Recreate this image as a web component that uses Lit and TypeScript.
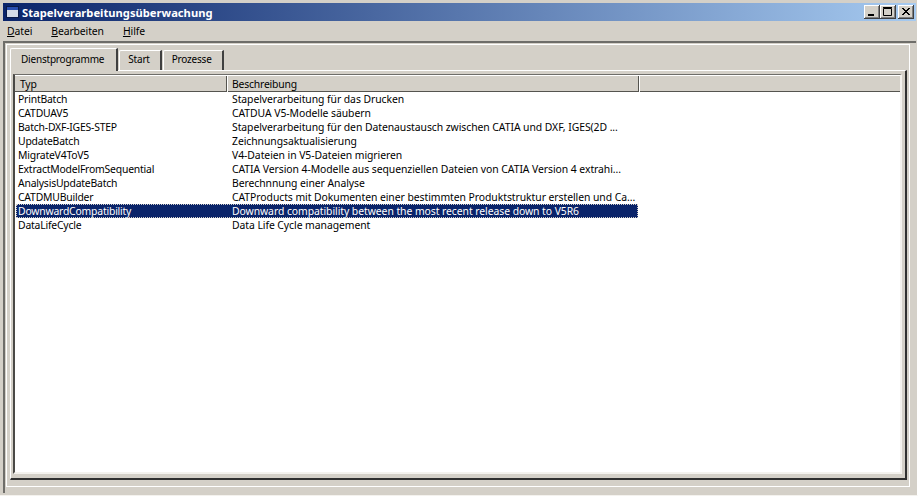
import { LitElement, html, css } from "lit";
import { customElement } from "lit/decorators.js";

const rows: [string, string][] = [
  ["PrintBatch", "Stapelverarbeitung für das Drucken"],
  ["CATDUAV5", "CATDUA V5-Modelle säubern"],
  ["Batch-DXF-IGES-STEP", "Stapelverarbeitung für den Datenaustausch zwischen CATIA und DXF, IGES(2D ..."],
  ["UpdateBatch", "Zeichnungsaktualisierung"],
  ["MigrateV4ToV5", "V4-Dateien in V5-Dateien migrieren"],
  ["ExtractModelFromSequential", "CATIA Version 4-Modelle aus sequenziellen Dateien von CATIA Version 4 extrahi..."],
  ["AnalysisUpdateBatch", "Berechnnung einer Analyse"],
  ["CATDMUBuilder", "CATProducts mit Dokumenten einer bestimmten Produktstruktur erstellen und Ca..."],
  ["DownwardCompatibility", "Downward compatibility between the most recent release down to V5R6"],
  ["DataLifeCycle", "Data Life Cycle management"],
];

@customElement("app-root")
export class AppRoot extends LitElement {
  static styles = css`
    :host { display: block; width: 918px; height: 496px; overflow: hidden; background: #d4d0c8;
      font: 10.4px "Noto Sans", sans-serif; letter-spacing: -0.2px; color: #000; }
    .window { box-sizing: border-box; height: 496px; padding: 3px 1px 2px 3px; display: flex; flex-direction: column; border-right: 1px solid #fff; border-bottom: 1px solid #f4f2ee; }
    .title { height: 18px; flex: none; display: flex; align-items: center; background: linear-gradient(90deg, #0a246a, #a6caf0); color: #fff; font-weight: 700; font-size: 11.2px; letter-spacing: 0; padding: 0 2px 0 3px; }
    .title svg { display: block; margin-right: 3px; }
    .title span { flex: 1; }
    .wb { box-sizing: border-box; width: 16px; height: 14px; background: #d4d0c8; box-shadow: inset -1px -1px 0 #404040, inset 1px 1px 0 #fff, inset -2px -2px 0 #808080; display: flex; }
    .wb svg { display: block; }
    .wb.gap { margin-left: 2px; }
    .menu { height: 20px; flex: none; display: flex; align-items: center; padding: 0 0 0 4px; gap: 19px; letter-spacing: -0.1px; }
    .frame { flex: 1; min-height: 0; border-top: 2px solid #6e6d69; border-left: 2px solid #6e6d69; display: flex; flex-direction: column; }
    .inner { flex: 1; min-height: 0; margin: 1px 6px 6px 1px; border: 1px solid #fff; padding: 1px 2px 6px 3px; display: flex; flex-direction: column; }
    .tabs { display: flex; height: 24px; flex: none; align-items: flex-end; position: relative; z-index: 1; font-size: 10px; }
    .tab { box-sizing: border-box; height: 20px; border-top: 1px solid #fff; border-left: 1px solid #fff; border-right: 2px solid #404040; border-top-left-radius: 2px; display: flex; align-items: center; padding: 0 10px 3px 8px; margin-left: 1px; }
    .tab.active { height: 23px; margin: 0 0 -1px 0; padding: 0 12px 3px 10px; background: #d4d0c8; }
    .pane { flex: 1; min-height: 0; border-top: 1px solid #fff; border-left: 1px solid #fff; border-right: 2px solid #303030; border-bottom: 2px solid #303030; padding: 3px 3px 4px 2px; display: flex; }
    .list { flex: 1; min-width: 0; border-top: 1px solid #6e6d69; border-left: 2px solid #4a4946; border-right: 2px solid #f4f2ee; border-bottom: 2px solid #f4f2ee; background: #fff; display: flex; flex-direction: column; }
    .head { height: 15px; flex: none; display: grid; grid-template-columns: 212px 412px 1fr; background: #d4d0c8; border-top: 1px solid #fff; border-bottom: 1px solid #55544f; }
    .head div { padding-left: 5px; border-right: 1px solid #55544f; box-shadow: 1px 0 0 #fff; line-height: 16px; }
    .head div:last-child { border-right: 0; box-shadow: none; }
    .rows { flex: 1; padding: 0 0 0 1px; }
    .row { width: 622px; height: 14px; display: grid; grid-template-columns: 214px 1fr; line-height: 14px; white-space: nowrap; box-sizing: border-box; }
    .row div { padding-left: 2px; overflow: hidden; }
    .row div + div { letter-spacing: -0.06px; }
    .row.sel { background: #0a246a; color: #fff; outline: 1px dotted #d4d0c8; outline-offset: -1px; }
  `;

  render() {
    return html`<div class="window">
      <div class="title">
        <svg width="13" height="12" viewBox="0 0 13 12"><rect x="0.5" y="0.5" width="12" height="11" fill="#d4dbe8" stroke="#0a1a48"/><rect x="1" y="1" width="11" height="3" fill="#2a4fb0"/></svg>
        <span>Stapelverarbeitungsüberwachung</span>
        <div class="wb"><svg width="16" height="14"><rect x="4" y="9" width="6" height="2" fill="#000"/></svg></div>
        <div class="wb"><svg width="16" height="14"><path d="M3.5 3.5h8v7h-8z M3 2.5h9" fill="none" stroke="#000"/></svg></div>
        <div class="wb gap"><svg width="16" height="14"><path d="M4 3l7 7M5 3l7 7M11 3l-7 7M12 3l-7 7" stroke="#000"/></svg></div>
      </div>
      <div class="menu"><span><u>D</u>atei</span><span><u>B</u>earbeiten</span><span><u>H</u>ilfe</span></div>
      <div class="frame"><div class="inner">
        <div class="tabs">
          <div class="tab active">Dienstprogramme</div>
          <div class="tab">Start</div>
          <div class="tab">Prozesse</div>
        </div>
        <div class="pane"><div class="list">
          <div class="head"><div>Typ</div><div>Beschreibung</div><div></div></div>
          <div class="rows">${rows.map((r, i) => html`<div class="row ${i === 8 ? "sel" : ""}"><div>${r[0]}</div><div>${r[1]}</div></div>`)}</div>
        </div></div>
      </div></div>
    </div>`;
  }
}
